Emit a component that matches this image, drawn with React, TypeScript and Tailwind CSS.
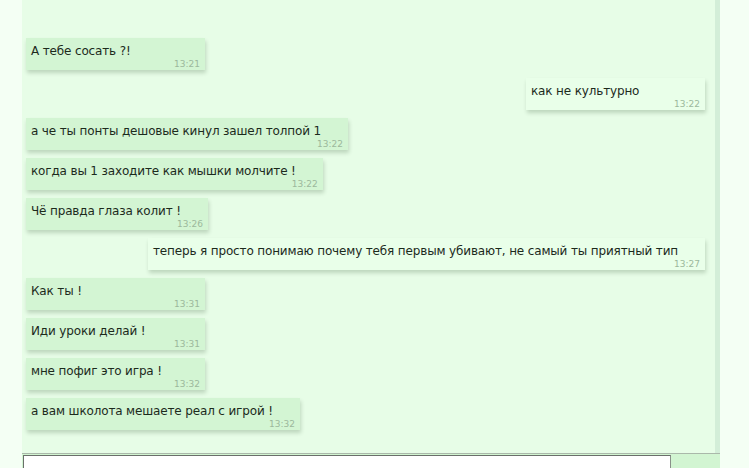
type Message = {
  text: string;
  time: string;
  mine?: boolean;
};

const MESSAGES: Message[] = [
  { text: "А тебе сосать ?!", time: "13:21" },
  { text: "как не культурно", time: "13:22", mine: true },
  { text: "а че ты понты дешовые кинул зашел толпой 1", time: "13:22" },
  { text: "когда вы 1 заходите как мышки молчите !", time: "13:22" },
  { text: "Чё правда глаза колит !", time: "13:26" },
  {
    text: "теперь я просто понимаю почему тебя первым убивают, не самый ты приятный тип",
    time: "13:27",
    mine: true,
  },
  { text: "Как ты !", time: "13:31" },
  { text: "Иди уроки делай !", time: "13:31" },
  { text: "мне пофиг это игра !", time: "13:32" },
  { text: "а вам школота мешаете реал с игрой !", time: "13:32" },
];

function Bubble({ msg }: { msg: Message }) {
  return (
    <div className={`flex ${msg.mine ? "justify-end" : "justify-start"}`}>
      <div
        className={`min-w-[179px] h-[32px] pl-[5px] pr-[5px] pt-[6px] shadow-[1px_3px_4px_rgba(0,40,0,0.18)] ${
          msg.mine ? "bg-[#e9ffe9]" : "bg-[#d3f5d3]"
        }`}
      >
        <div className="pr-[22px] text-[12px] leading-[15px] tracking-[-0.15px] text-[#1c2a1c] whitespace-nowrap">
          {msg.text}
        </div>
        <div className="text-right text-[9px] leading-[10px] text-[#9cb89c]">
          {msg.time}
        </div>
      </div>
    </div>
  );
}

export default function App() {
  return (
    <div
      className="w-[749px] h-[468px] bg-[#f4fff4] pl-[22px] overflow-hidden"
      style={{ fontFamily: '"DejaVu Sans", Verdana, sans-serif' }}
    >
      <div className="w-[698px] h-full flex flex-col">
        {/* message list */}
        <div className="h-[453px] bg-[#e7fde7] border-r-[5px] border-[#d3eed8] pt-[38px] pl-[4px] pr-[10px] flex flex-col gap-[8px] overflow-hidden">
          {MESSAGES.map((m, i) => (
            <Bubble key={i} msg={m} />
          ))}
        </div>
        {/* input row */}
        <div className="flex-1 border-t border-[#aab8aa] bg-[#d2f5d2] flex pt-[1px] pl-[1px]">
          <div className="w-[648px] h-full bg-white border-t border-l border-[#6a6f6a] border-r border-r-[#8a908a]" />
        </div>
      </div>
    </div>
  );
}
